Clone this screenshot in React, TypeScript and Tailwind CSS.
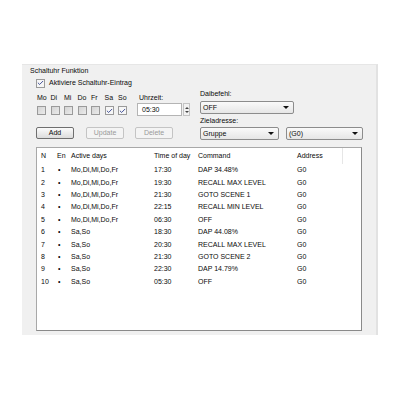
import { Check } from "lucide-react";

const days = ["Mo", "Di", "Mi", "Do", "Fr", "Sa", "So"];
const checkedDays = ["Sa", "So"];

type Entry = { n: number; days: string; time: string; command: string; address: string };

const weekdays = "Mo,Di,Mi,Do,Fr";
const weekend = "Sa,So";

const entries: Entry[] = [
  { n: 1, days: weekdays, time: "17:30", command: "DAP 34.48%", address: "G0" },
  { n: 2, days: weekdays, time: "19:30", command: "RECALL MAX LEVEL", address: "G0" },
  { n: 3, days: weekdays, time: "21:30", command: "GOTO SCENE 1", address: "G0" },
  { n: 4, days: weekdays, time: "22:15", command: "RECALL MIN LEVEL", address: "G0" },
  { n: 5, days: weekdays, time: "06:30", command: "OFF", address: "G0" },
  { n: 6, days: weekend, time: "18:30", command: "DAP 44.08%", address: "G0" },
  { n: 7, days: weekend, time: "20:30", command: "RECALL MAX LEVEL", address: "G0" },
  { n: 8, days: weekend, time: "21:30", command: "GOTO SCENE 2", address: "G0" },
  { n: 9, days: weekend, time: "22:30", command: "DAP 14.79%", address: "G0" },
  { n: 10, days: weekend, time: "05:30", command: "OFF", address: "G0" },
];

function Box({ checked }: { checked?: boolean }) {
  return (
    <div
      className={
        "flex h-[9px] w-[9px] items-center justify-center border border-[#9a9a9a] " +
        (checked ? "bg-[#f6f6f6]" : "bg-gradient-to-br from-[#d4d4d4] to-[#ebebeb]")
      }
    >
      {checked && <Check size={8} strokeWidth={3} className="text-[#2b3d8c]" />}
    </div>
  );
}

function Select({ value, width }: { value: string; width: string }) {
  return (
    <div
      className={
        "flex h-[13px] items-center justify-between rounded-[2px] border border-[#8c8c8c] bg-gradient-to-b from-[#fafafa] to-[#e6e6e6] pl-[2px] pr-[4px] " +
        width
      }
    >
      <span>{value}</span>
      <span className="h-0 w-0 border-x-[3px] border-t-[3px] border-x-transparent border-t-[#111]" />
    </div>
  );
}

function Button({ label, disabled }: { label: string; disabled?: boolean }) {
  return (
    <div
      className={
        "flex h-[12px] w-[38px] items-center justify-center rounded-[2px] border " +
        (disabled
          ? "border-[#c4c4c4] bg-[#f4f4f4] text-[#9a9a9a]"
          : "border-[#6f6f6f] bg-gradient-to-b from-[#fbfbfb] to-[#dcdcdc]")
      }
    >
      {label}
    </div>
  );
}

export default function App() {
  return (
    <div
      className="h-[400px] w-[400px] bg-white pl-[22px] pt-[64px] text-[7px] leading-[10px] text-[#0a0a0a]"
      style={{ fontFamily: '"Liberation Sans", Arial, sans-serif' }}
    >
      <div className="h-[271px] w-[356px] border-r-2 border-t border-r-[#e2e2e2] border-t-[#e6e6e6] bg-[#f0f0f0]">
        <div className="pl-[8px] pt-[1px]">Schaltuhr Funktion</div>

        <div className="mt-[2px] flex items-center gap-[4px] pl-[14px]">
          <Box checked />
          <span>Aktiviere Schaltuhr-Eintrag</span>
        </div>

        <div className="mt-[1px] flex pl-[14px]">
          {/* days, time and buttons */}
          <div className="flex w-[164px] flex-col pt-[4px]">
            <div className="flex">
              <div className="grid w-[101px] grid-cols-[repeat(7,13.5px)]">
                {days.map((d) => (
                  <div key={d} className="pl-[1px]">
                    {d}
                  </div>
                ))}
                {days.map((d) => (
                  <div key={d + "-box"} className="mt-[2px] pl-[1px]">
                    <Box checked={checkedDays.includes(d)} />
                  </div>
                ))}
              </div>
              <div className="flex flex-col">
                <div className="pl-[2px]">Uhrzeit:</div>
                <div className="flex items-center gap-[1px]">
                  <div className="flex h-[13px] w-[45px] items-center border border-[#b4b4b4] bg-white pl-[4px]">
                    05:30
                  </div>
                  <div className="flex h-[13px] w-[7px] flex-col items-center justify-center gap-[2px] border border-[#c4c4c4] bg-[#f2f2f2]">
                    <span className="h-0 w-0 border-x-[2px] border-b-[2px] border-x-transparent border-b-[#444]" />
                    <span className="h-0 w-0 border-x-[2px] border-t-[2px] border-x-transparent border-t-[#444]" />
                  </div>
                </div>
              </div>
            </div>
            <div className="mt-[11px] flex gap-[14px]">
              <Button label="Add" />
              <div className="-ml-[2px] flex gap-[11px]">
                <Button label="Update" disabled />
                <Button label="Delete" disabled />
              </div>
            </div>
          </div>

          {/* command and target address */}
          <div className="flex flex-col">
            <div>Daibefehl:</div>
            <div className="mt-[2px]">
              <Select value="OFF" width="w-[94px]" />
            </div>
            <div className="mt-[2px]">Zieladresse:</div>
            <div className="mt-[1px] flex gap-[7px]">
              <Select value="Gruppe" width="w-[79px]" />
              <Select value="(G0)" width="w-[77px]" />
            </div>
          </div>
        </div>

        <div className="ml-[14px] mt-[7px] h-[184px] w-[326px] border border-[#a8a8a8] border-b-[#8a8a8a] border-r-[#8a8a8a] bg-white">
          <div className="flex h-[16px] items-center">
            <div className="w-[17px] pl-[4px]">N</div>
            <div className="w-[15px] pl-[3px]">En</div>
            <div className="w-[83px] pl-[2px]">Active days</div>
            <div className="w-[44px] pl-[2px]">Time of day</div>
            <div className="w-[99px] pl-[2px]">Command</div>
            <div className="h-full w-[48px] border-r border-[#e6e6e6] pl-[2px] leading-[16px]">Address</div>
          </div>
          {entries.map((e) => (
            <div key={e.n} className="flex h-[12.4px] items-center">
              <div className="w-[17px] pl-[4px]">{e.n}</div>
              <div className="w-[15px] pl-[4px]">•</div>
              <div className="w-[83px] pl-[2px]">{e.days}</div>
              <div className="w-[44px] pl-[2px]">{e.time}</div>
              <div className="w-[99px] pl-[2px]">{e.command}</div>
              <div className="w-[48px] pl-[2px]">{e.address}</div>
            </div>
          ))}
        </div>
      </div>
    </div>
  );
}
